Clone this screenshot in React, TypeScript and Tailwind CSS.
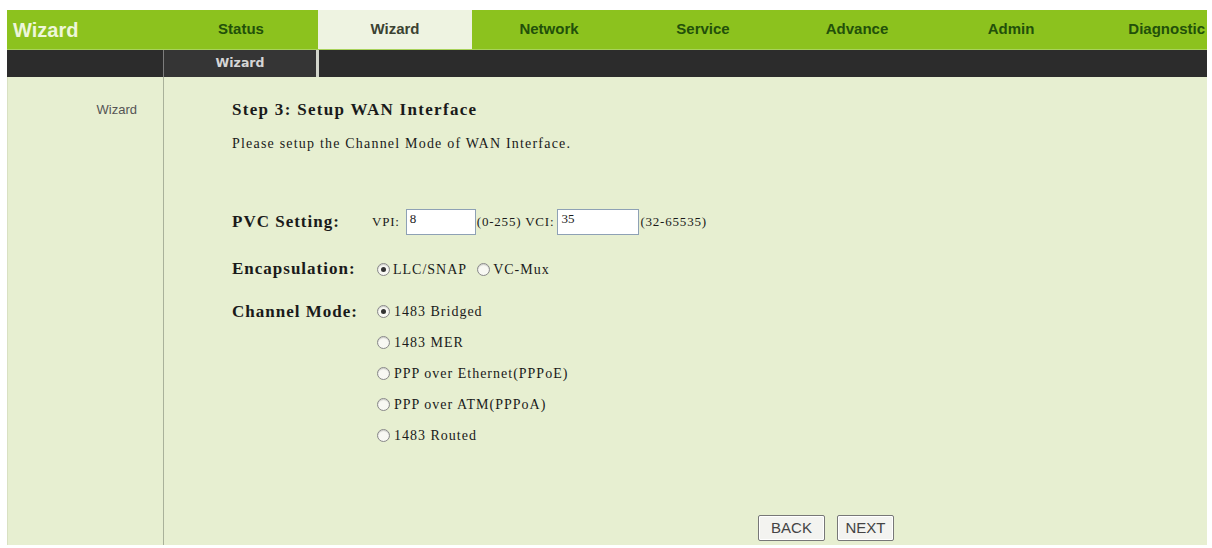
const tabs = ["Status", "Wizard", "Network", "Service", "Advance", "Admin"];

const modes = [
  { label: "1483 Bridged", checked: true },
  { label: "1483 MER" },
  { label: "PPP over Ethernet(PPPoE)" },
  { label: "PPP over ATM(PPPoA)" },
  { label: "1483 Routed" },
];

function Radio({ checked }: { checked?: boolean }) {
  return (
    <span className="inline-flex h-[13px] w-[13px] shrink-0 items-center justify-center rounded-full border border-[#888] bg-[#f8f8f3] shadow-[inset_0_1px_1px_rgba(0,0,0,0.18)]">
      {checked && <span className="h-[5px] w-[5px] rounded-full bg-[#333]" />}
    </span>
  );
}

export default function App() {
  return (
    <div className="h-[548px] w-[1212px] bg-white pl-[7px] pt-[10px]">
      <div className="flex w-[1200px] flex-col font-['Liberation_Sans',Arial,sans-serif]">
        {/* top menu */}
        <div className="flex h-[40px] items-center border-b border-[#a8d25a] bg-[#8cc21e]">
          <div className="w-[157px] pl-[6px] text-[20px] font-bold text-[#eef6da]">Wizard</div>
          {tabs.map((t) => (
            <div
              key={t}
              className={
                t === "Wizard"
                  ? "flex h-full w-[154px] items-center justify-center bg-[#eef3e1] text-[15px] font-bold text-[#3b4232]"
                  : "flex h-full w-[154px] items-center justify-center text-[15px] font-bold text-[#22500a]"
              }
            >
              {t}
            </div>
          ))}
          <div className="flex-1 pr-[2px] text-right text-[15px] font-bold text-[#22500a]">Diagnostic</div>
        </div>

        {/* sub menu */}
        <div className="flex h-[27px] bg-[#2c2c2c]">
          <div className="w-[157px] border-r border-[#7d7d7d]" />
          <div className="flex w-[152px] items-center justify-center bg-[#353535] font-['DejaVu_Sans',sans-serif] text-[12.5px] font-bold text-[#d6d6d6]">
            Wizard
          </div>
          <div className="w-[3px] bg-[#d3d6cc]" />
          <div className="flex-1" />
        </div>

        {/* body */}
        <div className="flex h-[468px] border-l border-[#d9e1c2] bg-[#e7efd1]">
          <div className="w-[156px] border-r border-[#a9b19a] pr-[26px] pt-[23px] text-right text-[13px] text-[#555]">
            Wizard
          </div>
          <div className="flex flex-1 flex-col pl-[68px] pt-[23px] font-['Liberation_Serif','Times_New_Roman',serif] text-[#1a1a1a]">
            <div className="h-[20px] text-[17px] font-bold leading-[20px] tracking-[1.3px]">
              Step 3: Setup WAN Interface
            </div>
            <div className="mt-[15px] h-[17px] text-[14px] leading-[17px] tracking-[1.2px]">
              Please setup the Channel Mode of WAN Interface.
            </div>

            <div className="mt-[55px] flex h-[30px] items-center">
              <div className="w-[140px] text-[17px] font-bold tracking-[1px]">PVC Setting:</div>
              <span className="text-[13px] tracking-[0.8px]">VPI:</span>
              <div className="ml-[6px] h-[26px] w-[70px] border border-[#8ea1b5] bg-white px-[3px] text-[13px] leading-[18px]">
                8
              </div>
              <span className="ml-[1px] text-[13px] tracking-[0.8px]">(0-255) VCI:</span>
              <div className="ml-[3px] h-[26px] w-[82px] border border-[#8ea1b5] bg-white px-[3px] text-[13px] leading-[18px]">
                35
              </div>
              <span className="ml-[1px] text-[13px] tracking-[0.8px]">(32-65535)</span>
            </div>

            <div className="mt-[17px] flex h-[30px] items-center">
              <div className="w-[140px] text-[17px] font-bold tracking-[1px]">Encapsulation:</div>
              <label className="ml-[5px] flex items-center gap-[3px] text-[14px] tracking-[1px]">
                <Radio checked />
                LLC/SNAP
              </label>
              <label className="ml-[10px] flex items-center gap-[3px] text-[14px] tracking-[1px]">
                <Radio />
                VC-Mux
              </label>
            </div>

            <div className="mt-[12px] flex">
              <div className="flex h-[31px] w-[140px] items-center text-[17px] font-bold tracking-[1px]">
                Channel Mode:
              </div>
              <div className="flex flex-col">
                {modes.map((m) => (
                  <label
                    key={m.label}
                    className="ml-[5px] flex h-[31px] items-center gap-[4px] text-[14px] tracking-[1px]"
                  >
                    <Radio checked={m.checked} />
                    {m.label}
                  </label>
                ))}
              </div>
            </div>

            <div className="mb-[4px] mt-auto flex gap-[12px] pl-[526px] font-['Liberation_Sans',Arial,sans-serif]">
              <button className="h-[26px] w-[67px] rounded-[2px] border border-[#777] bg-[#f3f3f0] text-[15px] text-[#444] shadow-[inset_0_0_0_1px_#fff]">
                BACK
              </button>
              <button className="h-[26px] w-[57px] rounded-[2px] border border-[#777] bg-[#f3f3f0] text-[15px] text-[#444] shadow-[inset_0_0_0_1px_#fff]">
                NEXT
              </button>
            </div>
          </div>
        </div>
      </div>
    </div>
  );
}
